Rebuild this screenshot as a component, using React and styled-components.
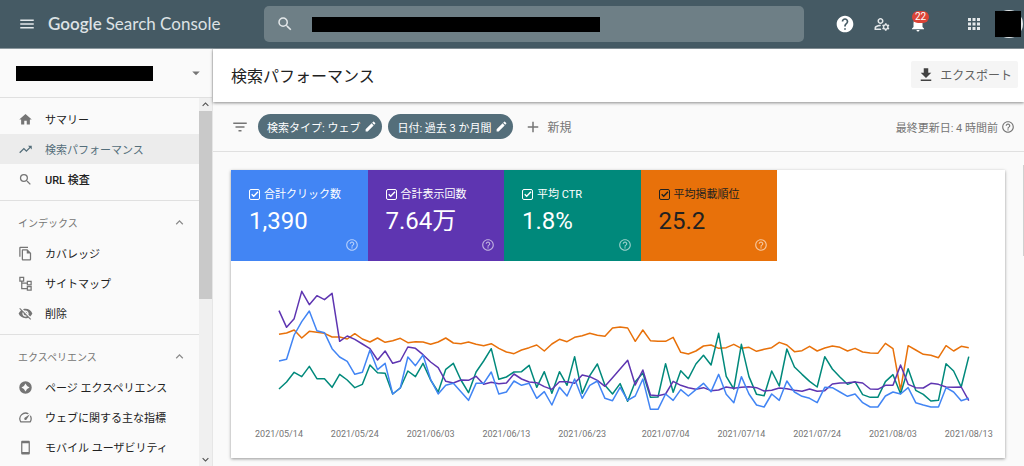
import { useState } from 'react';
import styled, { createGlobalStyle } from 'styled-components';
import {
  MdAdd,
  MdApps,
  MdArrowDropDown,
  MdEdit,
  MdExpandLess,
  MdExpandMore,
  MdFileDownload,
  MdFilterList,
  MdHelp,
  MdHelpOutline,
  MdHome,
  MdMenu,
  MdNotifications,
  MdOutlineFileCopy,
  MdOutlineManageAccounts,
  MdOutlineSpeed,
  MdSearch,
  MdStayCurrentPortrait,
  MdTrendingUp,
  MdVisibilityOff
} from 'react-icons/md';

const GlobalStyle = createGlobalStyle`
  * {
    box-sizing: border-box;
  }

  body {
    margin: 0;
    background-color: #fafafa;
    color: #212121;
    font-family: Roboto, 'Noto Sans CJK JP', sans-serif;
    font-size: 11px;
  }

  button, input {
    font-family: inherit;
  }

  button {
    border: none;
    background: none;
    padding: 0;
    margin: 0;
    cursor: pointer;
  }

  svg {
    display: block;
    flex-shrink: 0;
  }
`;

const Page = styled.div`
  display: flex;
  flex-direction: column;
  height: 100vh;
  overflow: hidden;
`;

const Header = styled.header`
  display: flex;
  align-items: center;
  background-color: #455a64;
  border-bottom: 1px solid #8b989e;
  padding: 6px 1px 6px 18px;
  color: #e4e8ea;
`;

const IconButton = styled.button`
  position: relative;
  display: grid;
  place-items: center;
  color: ${({ $color }) => $color || '#e4e8ea'};
`;

const Logo = styled.a`
  display: flex;
  flex-shrink: 0;
  gap: 4px;
  width: 228px;
  padding-left: 12px;
  font-family: Lato, sans-serif;
  font-size: 17px;
  line-height: 24px;
  white-space: nowrap;
  text-decoration: none;
  color: #dde2e4;

  strong {
    font-weight: 600;
  }
`;

const SearchBox = styled.label`
  display: flex;
  align-items: center;
  gap: 18px;
  flex: 1;
  height: 36px;
  padding: 0 12px;
  border-radius: 5px;
  background-color: #6e7f86;
`;

const SearchField = styled.div`
  position: relative;
  display: flex;
  align-items: center;
  flex: 1;

  input {
    width: 100%;
    border: none;
    outline: none;
    background: transparent;
    color: #fff;
    font-size: 12px;
  }
`;

const Redacted = styled.span`
  display: block;
  width: ${({ $width }) => $width}px;
  height: 15px;
  background-color: #000;
`;

const SearchValue = styled(Redacted)`
  position: absolute;
  left: 0;
`;

const HeaderActions = styled.div`
  display: flex;
  align-items: center;
  gap: 18px;
  padding-left: 31px;
`;

const Badge = styled.span`
  position: absolute;
  top: -4px;
  left: 3px;
  padding: 0 3px;
  border-radius: 6px;
  background-color: #db4437;
  color: #fff;
  font-size: 10px;
  line-height: 12px;
`;

const Account = styled.button`
  display: grid;
  place-items: center start;
  width: 28px;
  height: 28px;
  margin-left: -6px;
  border-radius: 50%;
  background-color: #e4e8ea;

  span {
    width: 26px;
    height: 26px;
    background-color: #000;
  }
`;

const AppsSlot = styled.div`
  padding: 0 0 0 20px;
`;

const Body = styled.div`
  display: flex;
  flex: 1;
  min-height: 0;
`;

const Sidebar = styled.nav`
  display: flex;
  flex-direction: column;
  width: 213px;
  flex-shrink: 0;
  border-right: 1px solid #e6e6e6;
`;

const Property = styled.button`
  display: flex;
  align-items: center;
  justify-content: space-between;
  flex-shrink: 0;
  height: 49px;
  padding: 0 7px 0 16px;
  border-bottom: 1px solid #e0e0e0;
  color: #757575;
`;

const SidebarBody = styled.div`
  display: flex;
  flex: 1;
  min-height: 0;
`;

const SidebarList = styled.div`
  flex: 1;
  overflow: hidden;
`;

const Scrollbar = styled.div`
  display: flex;
  flex-direction: column;
  align-items: center;
  width: 13px;
  background-color: #f0f0f0;
  color: #505050;
`;

const Thumb = styled.div`
  width: 100%;
  height: 51%;
  margin-bottom: auto;
  background-color: #c9c9c9;
`;

const Section = styled.section`
  padding: 6px 0;
  border-bottom: 1px solid #e0e0e0;
`;

const SectionTitle = styled.button`
  display: flex;
  align-items: center;
  justify-content: space-between;
  width: 100%;
  height: 31px;
  padding: 0 12px 0 18px;
  color: #757575;
  font-size: 10px;

  svg {
    color: #8a8a8a;
  }
`;

const Item = styled.a`
  display: flex;
  align-items: center;
  gap: 12px;
  height: 30px;
  padding-left: 18px;
  white-space: nowrap;
  text-decoration: none;
  font-weight: ${({ $bold }) => ($bold ? 500 : 400)};
  background-color: ${({ $active }) => ($active ? '#ececec' : 'transparent')};
  color: ${({ $active }) => ($active ? '#546e7a' : '#212121')};

  svg {
    color: ${({ $active }) => ($active ? '#546e7a' : '#757575')};
  }
`;

const Main = styled.main`
  position: relative;
  display: flex;
  flex-direction: column;
  flex: 1;
  min-width: 0;
`;

const TitleBar = styled.div`
  display: flex;
  align-items: center;
  justify-content: space-between;
  height: 53px;
  flex-shrink: 0;
  padding: 0 6px 2px 18px;
  background-color: #fff;
  box-shadow: 0 1px 3px rgba(0, 0, 0, .45);
`;

const Title = styled.h1`
  margin: 0;
  font-size: 16px;
  font-weight: 400;
`;

const Export = styled.button`
  display: flex;
  align-items: center;
  gap: 5px;
  height: 27px;
  padding: 0 6px;
  border-radius: 2px;
  background-color: #f5f5f5;
  color: #424242;
  font-size: 12px;

  span {
    color: #616161;
  }
`;

const Filters = styled.div`
  display: flex;
  align-items: center;
  gap: 6px;
  height: 50px;
  flex-shrink: 0;
  padding: 0 9px 0 18px;
  border-bottom: 1px solid #e0e0e0;
  color: #757575;
`;

const FilterIcon = styled.div`
  margin-right: 3px;
`;

const Chip = styled.button`
  display: flex;
  align-items: center;
  gap: 4px;
  height: 25px;
  padding: 0 5px 0 9px;
  border-radius: 13px;
  background-color: #546e7a;
  color: #fff;
  font-size: 11px;
  white-space: nowrap;
`;

const NewFilter = styled.button`
  display: flex;
  align-items: center;
  gap: 5px;
  padding-left: 5px;
  color: #757575;
  font-size: 12px;
`;

const Updated = styled.div`
  display: flex;
  align-items: center;
  gap: 3px;
  margin-left: auto;
`;

const Content = styled.div`
  padding: 18px 19px 8px 18px;
`;

const PageScroll = styled.div`
  position: absolute;
  top: 116px;
  right: 0;
  width: 1px;
  height: 91px;
  background-color: #d0d0d0;
`;

const Card = styled.div`
  background-color: #fff;
  box-shadow: 0 1px 3px rgba(0, 0, 0, .4);
`;

const Metrics = styled.div`
  display: grid;
  grid-template-columns: repeat(4, 1fr);
  width: 546px;
`;

const Metric = styled.label`
  display: flex;
  flex-direction: column;
  position: relative;
  height: 91px;
  padding: 16px 18px 0;
  background-color: ${({ $background }) => $background};
  color: ${({ $dark }) => ($dark ? '#212121' : '#fff')};
  cursor: pointer;
`;

const MetricName = styled.span`
  display: flex;
  align-items: center;
  gap: 4px;
  line-height: 17px;
  white-space: nowrap;
`;

const MetricValue = styled.span`
  font-size: 24px;
  line-height: 36px;
`;

const MetricHelp = styled.span`
  position: absolute;
  right: 9px;
  bottom: 9px;
  color: #fff;
  opacity: .6;
`;

const Tick = styled.span`
  display: grid;

  input, svg {
    grid-area: 1 / 1;
    width: 11px;
    height: 11px;
    margin: 0;
  }

  input {
    appearance: none;
    border: 1px solid currentColor;
    border-radius: 2px;
    color: inherit;
  }

  svg {
    pointer-events: none;
  }

  input:not(:checked) + svg {
    visibility: hidden;
  }
`;

const ChartSvg = styled.svg`
  width: 100%;
  height: auto;

  polyline {
    fill: none;
    stroke-width: 1.5;
    stroke-linejoin: round;
  }

  text {
    fill: #757575;
    font-size: 9px;
    text-anchor: middle;
  }
`;

const metrics = [
  { name: '合計クリック数', value: '1,390', color: '#4285f4' },
  { name: '合計表示回数', value: '7.64万', color: '#5e35b1' },
  { name: '平均 CTR', value: '1.8%', color: '#00897b' },
  { name: '平均掲載順位', value: '25.2', color: '#e8710a', dark: true }
];

// one entry per day, measured downwards from the top of the plot
const series = [
  {
    color: '#e8710a',
    points: [163, 159, 150, 174, 154, 157, 160, 171, 171, 177, 161, 177, 186, 174, 187, 182, 175, 188, 185, 186, 193, 186, 174, 189, 191, 186, 193, 197, 191, 205, 216, 221, 210, 203, 195, 213, 192, 178, 185, 172, 167, 160, 166, 169, 144, 141, 144, 184, 150, 182, 184, 184, 172, 217, 222, 213, 198, 195, 205, 203, 193, 205, 202, 214, 208, 203, 187, 195, 215, 212, 199, 213, 204, 198, 202, 213, 205, 216, 219, 220, 190, 206, 330, 197, 210, 223, 226, 233, 197, 213, 199, 203]
  },
  {
    color: '#00897b',
    points: [327, 306, 277, 290, 259, 296, 296, 322, 283, 300, 323, 313, 255, 278, 280, 342, 324, 273, 290, 250, 300, 336, 268, 250, 300, 338, 276, 243, 206, 298, 291, 276, 275, 256, 322, 275, 340, 275, 316, 230, 340, 287, 252, 316, 342, 311, 364, 305, 279, 352, 351, 251, 337, 272, 296, 252, 226, 255, 160, 289, 327, 193, 290, 343, 347, 273, 318, 207, 261, 283, 304, 321, 230, 267, 291, 313, 305, 344, 352, 352, 305, 284, 341, 266, 331, 343, 363, 361, 251, 273, 321, 230]
  },
  {
    color: '#5e35b1',
    points: [92, 142, 116, 34, 74, 47, 59, 40, 184, 168, 178, 192, 206, 240, 213, 250, 243, 201, 205, 224, 246, 263, 304, 309, 300, 301, 289, 313, 307, 311, 309, 282, 297, 306, 308, 320, 328, 305, 305, 310, 285, 290, 301, 319, 293, 267, 241, 315, 270, 345, 347, 342, 304, 316, 323, 328, 323, 332, 330, 321, 325, 322, 320, 323, 333, 331, 324, 326, 331, 334, 327, 334, 332, 312, 309, 308, 306, 309, 327, 328, 316, 316, 255, 313, 323, 324, 310, 313, 321, 322, 321, 362]
  },
  {
    color: '#4285f4',
    points: [243, 238, 165, 125, 93, 152, 158, 206, 231, 244, 283, 277, 210, 269, 250, 342, 324, 231, 257, 225, 298, 342, 316, 310, 335, 361, 310, 310, 276, 342, 336, 303, 316, 310, 355, 335, 375, 322, 348, 297, 355, 316, 303, 355, 362, 322, 361, 348, 297, 388, 388, 342, 361, 329, 348, 329, 310, 335, 283, 343, 368, 290, 342, 375, 381, 342, 361, 303, 336, 349, 355, 368, 322, 323, 336, 349, 342, 368, 381, 381, 348, 336, 342, 323, 368, 375, 381, 381, 323, 336, 362, 355]
  }
];

const dates = [
  { day: 0, label: '2021/05/14' },
  { day: 10, label: '2021/05/24' },
  { day: 20, label: '2021/06/03' },
  { day: 30, label: '2021/06/13' },
  { day: 40, label: '2021/06/23' },
  { day: 51, label: '2021/07/04' },
  { day: 61, label: '2021/07/14' },
  { day: 71, label: '2021/07/24' },
  { day: 81, label: '2021/08/03' },
  { day: 91, label: '2021/08/13' }
];

const dayX = (day) => 48 + day * 7.58;
const pointY = (value) => 19 + value / 3;

function Chart() {
  return (
    <ChartSvg viewBox="0 0 774 197" role="img">
      {series.map(({ color, points }) => (
        <polyline
          key={color}
          stroke={color}
          points={points.map((value, day) => `${dayX(day)},${pointY(value)}`).join(' ')}
        />
      ))}
      {dates.map(({ day, label }) => (
        <text key={day} x={dayX(day)} y="176">{label}</text>
      ))}
    </ChartSvg>
  );
}

function SitemapIcon({ size }) {
  return (
    <svg width={size} height={size} viewBox="0 0 24 24" fill="none" stroke="currentColor" strokeWidth="2">
      <path d="M3 2h6v6H3zM15 8.500h6v5.500h-6zM15 17h6v5.500h-6zM6 8v12h9M6 11.500h9" />
    </svg>
  );
}

function ExperienceIcon({ size }) {
  return (
    <svg width={size} height={size} viewBox="0 0 24 24" fill="currentColor" fillRule="evenodd">
      <path d="M12 2a10 10 0 1 0 0 20a10 10 0 1 0 0-20zM12 5.500l2.500 4l4 2.500l-4 2.500l-2.500 4l-2.500-4l-4-2.500l4-2.500z" />
    </svg>
  );
}

const sections = [
  {
    items: [
      { name: 'サマリー', icon: MdHome },
      { name: '検索パフォーマンス', icon: MdTrendingUp, active: true },
      { name: 'URL 検査', icon: MdSearch, bold: true }
    ]
  },
  {
    title: 'インデックス',
    items: [
      { name: 'カバレッジ', icon: MdOutlineFileCopy },
      { name: 'サイトマップ', icon: SitemapIcon },
      { name: '削除', icon: MdVisibilityOff }
    ]
  },
  {
    title: 'エクスペリエンス',
    items: [
      { name: 'ページ エクスペリエンス', icon: ExperienceIcon },
      { name: 'ウェブに関する主な指標', icon: MdOutlineSpeed },
      { name: 'モバイル ユーザビリティ', icon: MdStayCurrentPortrait }
    ]
  }
];

function MetricTile({ name, value, color, dark }) {
  const [checked, setChecked] = useState(true);

  return (
    <Metric $background={color} $dark={dark}>
      <MetricName>
        <Tick>
          <input type="checkbox" checked={checked} onChange={() => setChecked(!checked)} />
          <svg viewBox="0 0 11 11" fill="none" stroke="currentColor" strokeWidth="1.400">
            <path d="M2.700 5.300l2 2l4.300-4.500" />
          </svg>
        </Tick>
        {name}
      </MetricName>
      <MetricValue>{value}</MetricValue>
      <MetricHelp>
        <MdHelpOutline size={14} />
      </MetricHelp>
    </Metric>
  );
}

export default function App() {
  const [query, setQuery] = useState('');

  return (
    <Page>
      <GlobalStyle />
      <Header>
        <IconButton aria-label="メニュー">
          <MdMenu size={18} />
        </IconButton>
        <Logo href="#">
          <strong>Google</strong>
          <span>Search Console</span>
        </Logo>
        <SearchBox>
          <MdSearch size={18} />
          <SearchField>
            <input
              type="text"
              aria-label="検索"
              value={query}
              onChange={e => setQuery(e.target.value)}
            />
            <SearchValue $width={288} />
          </SearchField>
        </SearchBox>
        <HeaderActions>
          <IconButton aria-label="ヘルプ" $color="#fff">
            <MdHelp size={20} />
          </IconButton>
          <IconButton aria-label="ユーザー設定">
            <MdOutlineManageAccounts size={18} />
          </IconButton>
          <IconButton aria-label="通知" $color="#fff">
            <MdNotifications size={18} />
            <Badge>22</Badge>
          </IconButton>
          <AppsSlot>
            <IconButton aria-label="アプリ">
              <MdApps size={18} />
            </IconButton>
          </AppsSlot>
          <Account aria-label="アカウント">
            <span />
          </Account>
        </HeaderActions>
      </Header>

      <Body>
        <Sidebar>
          <Property aria-label="プロパティ">
            <Redacted $width={137} />
            <MdArrowDropDown size={18} />
          </Property>
          <SidebarBody>
            <SidebarList>
              {sections.map(({ title, items }, index) => (
                <Section key={index}>
                  {title && (
                    <SectionTitle>
                      {title}
                      <MdExpandLess size={15} />
                    </SectionTitle>
                  )}
                  {items.map(({ name, icon: Icon, active, bold }) => (
                    <Item key={name} href="#" $active={active} $bold={bold}>
                      <Icon size={15} />
                      {name}
                    </Item>
                  ))}
                </Section>
              ))}
            </SidebarList>
            <Scrollbar>
              <MdExpandLess size={13} />
              <Thumb />
              <MdExpandMore size={13} />
            </Scrollbar>
          </SidebarBody>
        </Sidebar>

        <Main>
          <TitleBar>
            <Title>検索パフォーマンス</Title>
            <Export>
              <MdFileDownload size={18} />
              <span>エクスポート</span>
            </Export>
          </TitleBar>
          <Filters>
            <FilterIcon>
              <MdFilterList size={18} />
            </FilterIcon>
            <Chip>
              検索タイプ: ウェブ
              <MdEdit size={13} />
            </Chip>
            <Chip>
              日付: 過去 3 か月間
              <MdEdit size={13} />
            </Chip>
            <NewFilter>
              <MdAdd size={18} />
              新規
            </NewFilter>
            <Updated>
              最終更新日: 4 時間前
              <MdHelpOutline size={14} />
            </Updated>
          </Filters>
          <Content>
            <Card>
              <Metrics>
                {metrics.map((metric) => (
                  <MetricTile key={metric.name} {...metric} />
                ))}
              </Metrics>
              <Chart />
            </Card>
          </Content>
          <PageScroll />
        </Main>
      </Body>
    </Page>
  );
}
